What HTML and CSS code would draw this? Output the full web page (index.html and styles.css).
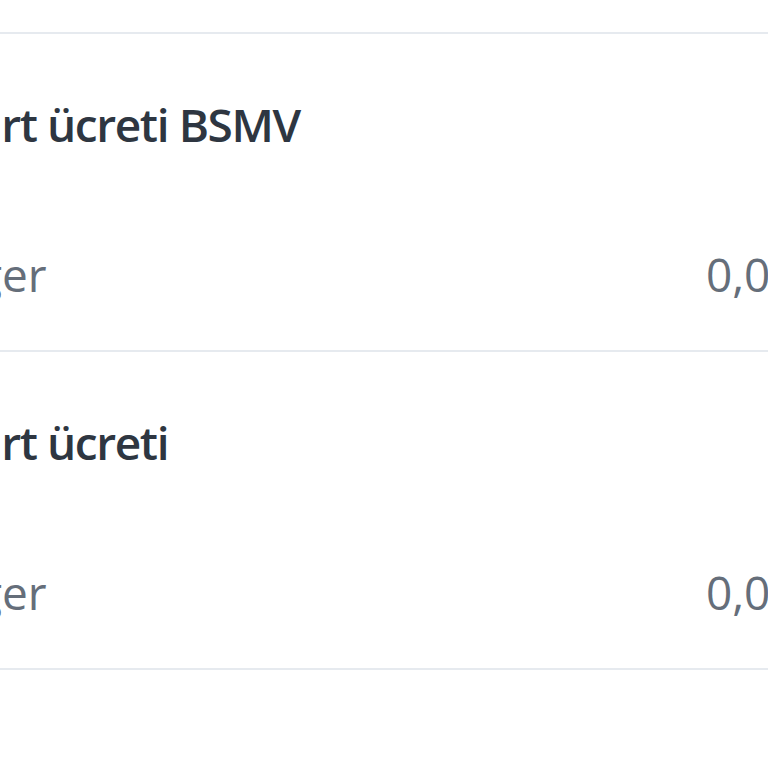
FILE: index.html
```html
<!DOCTYPE html>
<html lang="tr">
<head>
<meta charset="utf-8">
<link rel="stylesheet" href="styles.css">
</head>
<body>
<div class="list">
  <div class="row">
    <div class="title">Kart ücreti BSMV</div>
    <div class="line"><span class="label">Diğer</span><span class="value">0,00 TL</span></div>
  </div>
  <div class="row">
    <div class="title">Kart ücreti</div>
    <div class="line"><span class="label">Diğer</span><span class="value">0,00 TL</span></div>
  </div>
</div>
</body>
</html>
```
FILE: styles.css
```css
html, body {
  margin: 0;
  padding: 0;
  background: #ffffff;
  overflow: hidden;
  width: 768px;
  height: 768px;
}
.list {
  margin-top: 32px;
  margin-left: -62px;
  width: 1000px;
  border-top: 2px solid #e6eaef;
  font-family: "Open Sans", "Noto Sans", sans-serif;
}
.row {
  height: 316px;
  border-bottom: 2px solid #e6eaef;
  padding-left: 8px;
  box-sizing: content-box;
  display: flex;
  flex-direction: column;
}
.title {
  margin-top: 60px;
  margin-left: 2px;
  font-size: 46px;
  line-height: 60px;
  font-weight: 600;
  letter-spacing: -1.4px;
  color: #2e3641;
}
.line {
  margin-top: 90px;
  display: flex;
  justify-content: space-between;
  font-size: 46px;
  line-height: 60px;
  color: #656e7a;
  width: 912px;
}
.label {
  margin-left: -14px;
}
```
